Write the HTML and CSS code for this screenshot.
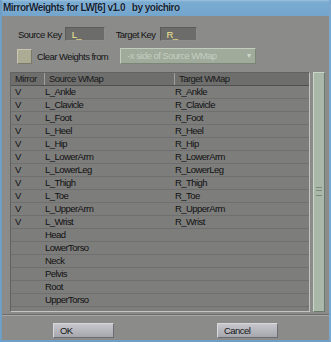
FILE: index.html
```html
<!DOCTYPE html>
<html lang="en">
<head>
  <meta charset="UTF-8" />
  <title>MirrorWeights for LW[6] v1.0</title>
  <link rel="stylesheet" href="styles.css">
</head>
<body>
<div class="window">
  <div class="titlebar">MirrorWeights for LW[6] v1.0&nbsp;&nbsp; by yoichiro</div>

  <div class="keys">
    <span class="lbl">Source Key</span>
    <span class="keybox kb1">L_</span>
    <span class="lbl lbl2">Target Key</span>
    <span class="keybox kb2">R_</span>
  </div>

  <div class="clear">
    <span class="check"></span>
    <span class="lbl">Clear Weights from</span>
    <span class="drop">-x side of Source WMap<span class="arrow">&#9662;</span></span>
  </div>

  <div class="listarea">
    <div class="list">
      <div class="row head"><span class="c1">Mirror</span><span class="c2">Source WMap</span><span class="c3">Target WMap</span></div>
      <div class="row"><span class="c1">V</span><span class="c2">L_Ankle</span><span class="c3">R_Ankle</span></div>
      <div class="row"><span class="c1">V</span><span class="c2">L_Clavicle</span><span class="c3">R_Clavicle</span></div>
      <div class="row"><span class="c1">V</span><span class="c2">L_Foot</span><span class="c3">R_Foot</span></div>
      <div class="row"><span class="c1">V</span><span class="c2">L_Heel</span><span class="c3">R_Heel</span></div>
      <div class="row"><span class="c1">V</span><span class="c2">L_Hip</span><span class="c3">R_Hip</span></div>
      <div class="row"><span class="c1">V</span><span class="c2">L_LowerArm</span><span class="c3">R_LowerArm</span></div>
      <div class="row"><span class="c1">V</span><span class="c2">L_LowerLeg</span><span class="c3">R_LowerLeg</span></div>
      <div class="row"><span class="c1">V</span><span class="c2">L_Thigh</span><span class="c3">R_Thigh</span></div>
      <div class="row"><span class="c1">V</span><span class="c2">L_Toe</span><span class="c3">R_Toe</span></div>
      <div class="row"><span class="c1">V</span><span class="c2">L_UpperArm</span><span class="c3">R_UpperArm</span></div>
      <div class="row"><span class="c1">V</span><span class="c2">L_Wrist</span><span class="c3">R_Wrist</span></div>
      <div class="row"><span class="c1"></span><span class="c2">Head</span><span class="c3"></span></div>
      <div class="row"><span class="c1"></span><span class="c2">LowerTorso</span><span class="c3"></span></div>
      <div class="row"><span class="c1"></span><span class="c2">Neck</span><span class="c3"></span></div>
      <div class="row"><span class="c1"></span><span class="c2">Pelvis</span><span class="c3"></span></div>
      <div class="row"><span class="c1"></span><span class="c2">Root</span><span class="c3"></span></div>
      <div class="row"><span class="c1"></span><span class="c2">UpperTorso</span><span class="c3"></span></div>
      <div class="row"><span class="c1"></span><span class="c2"></span><span class="c3"></span></div>
    </div>
    <div class="scroll"><span class="grip"></span></div>
  </div>

  <div class="buttons">
    <span class="btn ok">OK</span>
    <span class="btn cancel">Cancel</span>
  </div>
</div>
</body>
</html>
```

FILE: styles.css
```css
html, body { margin:0; padding:0; background:#8a8a8a; }
body { width:331px; height:342px; overflow:hidden; font-family:"Liberation Sans", Arial, sans-serif; font-size:9.5px; letter-spacing:-0.55px; color:#111; }

.window { box-sizing:border-box; height:342px; display:flex; flex-direction:column; background:#8b8b8a; border-left:2px solid #6f9ec6; border-right:2px solid #7aa8cf; border-bottom:2px solid #6f9ec6; }

.titlebar { height:16px; line-height:16px; padding-left:1px; background:linear-gradient(#9cc2de 0, #7aacd2 2px, #74a6cd 100%); font-weight:bold; font-size:10px; color:#0f1e33; text-shadow:0 0 1px rgba(230,240,250,0.6); letter-spacing:-0.5px; white-space:nowrap; }

.lbl { color:#141414; white-space:nowrap; }

.keys { display:flex; align-items:center; height:14px; margin-top:11px; padding-left:16px; }
.keybox { box-sizing:border-box; width:40px; height:14px; line-height:13px; padding-left:6px; background:#6c6c6b; border:1px solid #5c5c5c; border-right-color:#8e8e8e; border-bottom-color:#8e8e8e; color:#f0e890; }
.kb1 { margin-left:3px; }
.lbl2 { margin-left:11px; }
.kb2 { margin-left:4px; width:37px; }

.clear { display:flex; align-items:center; height:16px; margin-top:7px; padding-left:15px; }
.check { box-sizing:border-box; width:15px; height:15px; margin-right:5px; background:#acab94; border:1px solid #c6c6b2; border-right-color:#7a7a6a; border-bottom-color:#7a7a6a; }
.drop { box-sizing:border-box; position:relative; width:136px; height:16px; line-height:14px; margin-left:12px; padding-left:6px; background:#a0ab9c; border:1px solid #c4ccc0; border-right-color:#7c8478; border-bottom-color:#7c8478; color:#c5cdc1; }
.arrow { position:absolute; right:5px; top:0; font-size:8px; color:#cfd6cb; }

.listarea { display:flex; margin-top:8px; padding-left:8px; height:240px; }
.list { box-sizing:border-box; width:300px; height:240px; background:#7d7d7c; border:1px solid #626262; border-right-color:#c4c4c4; border-bottom-color:#c4c4c4; overflow:hidden; }
.row { display:flex; height:12px; line-height:12px; border-bottom:1px solid #6f6f6f; }
.head { height:12px; background:#6e6e6d; border-bottom:1px solid #505050; color:#1a1a1a; }
.c1 { width:33px; padding-left:4px; box-sizing:border-box; }
.c2 { width:130px; padding-left:1px; box-sizing:border-box; }
.c3 { flex:1; padding-left:1px; }
.head .c2, .head .c3 { border-left:1px solid #a0a0a0; padding-left:4px; }
.head .c2 { width:130px; }

.scroll { box-sizing:border-box; position:relative; width:12px; height:240px; margin-left:3px; background:#a9b8a8; border:1px solid #cad6c8; border-right-color:#6f786e; border-bottom-color:#6f786e; }
.grip { position:absolute; left:2px; right:2px; top:114px; height:7px; border-top:1px solid #7c887b; border-bottom:1px solid #7c887b; background:linear-gradient(transparent 2px, #7c887b 2px, #7c887b 3px, transparent 3px); }

.buttons { display:flex; align-items:center; margin-top:2px; padding-top:6px; height:20px; border-top:1px solid #6c6c6c; box-shadow:inset 0 1px 0 #a6a6a6; }
.btn { box-sizing:border-box; width:61px; height:15px; line-height:13px; padding-left:6px; background:linear-gradient(#c6c6cc, #a6a6ae); border:1px solid #d8d8dc; border-right-color:#6c6c72; border-bottom-color:#6c6c72; color:#151515; }
.ok { margin-left:51px; }
.cancel { margin-left:103px; }
```
